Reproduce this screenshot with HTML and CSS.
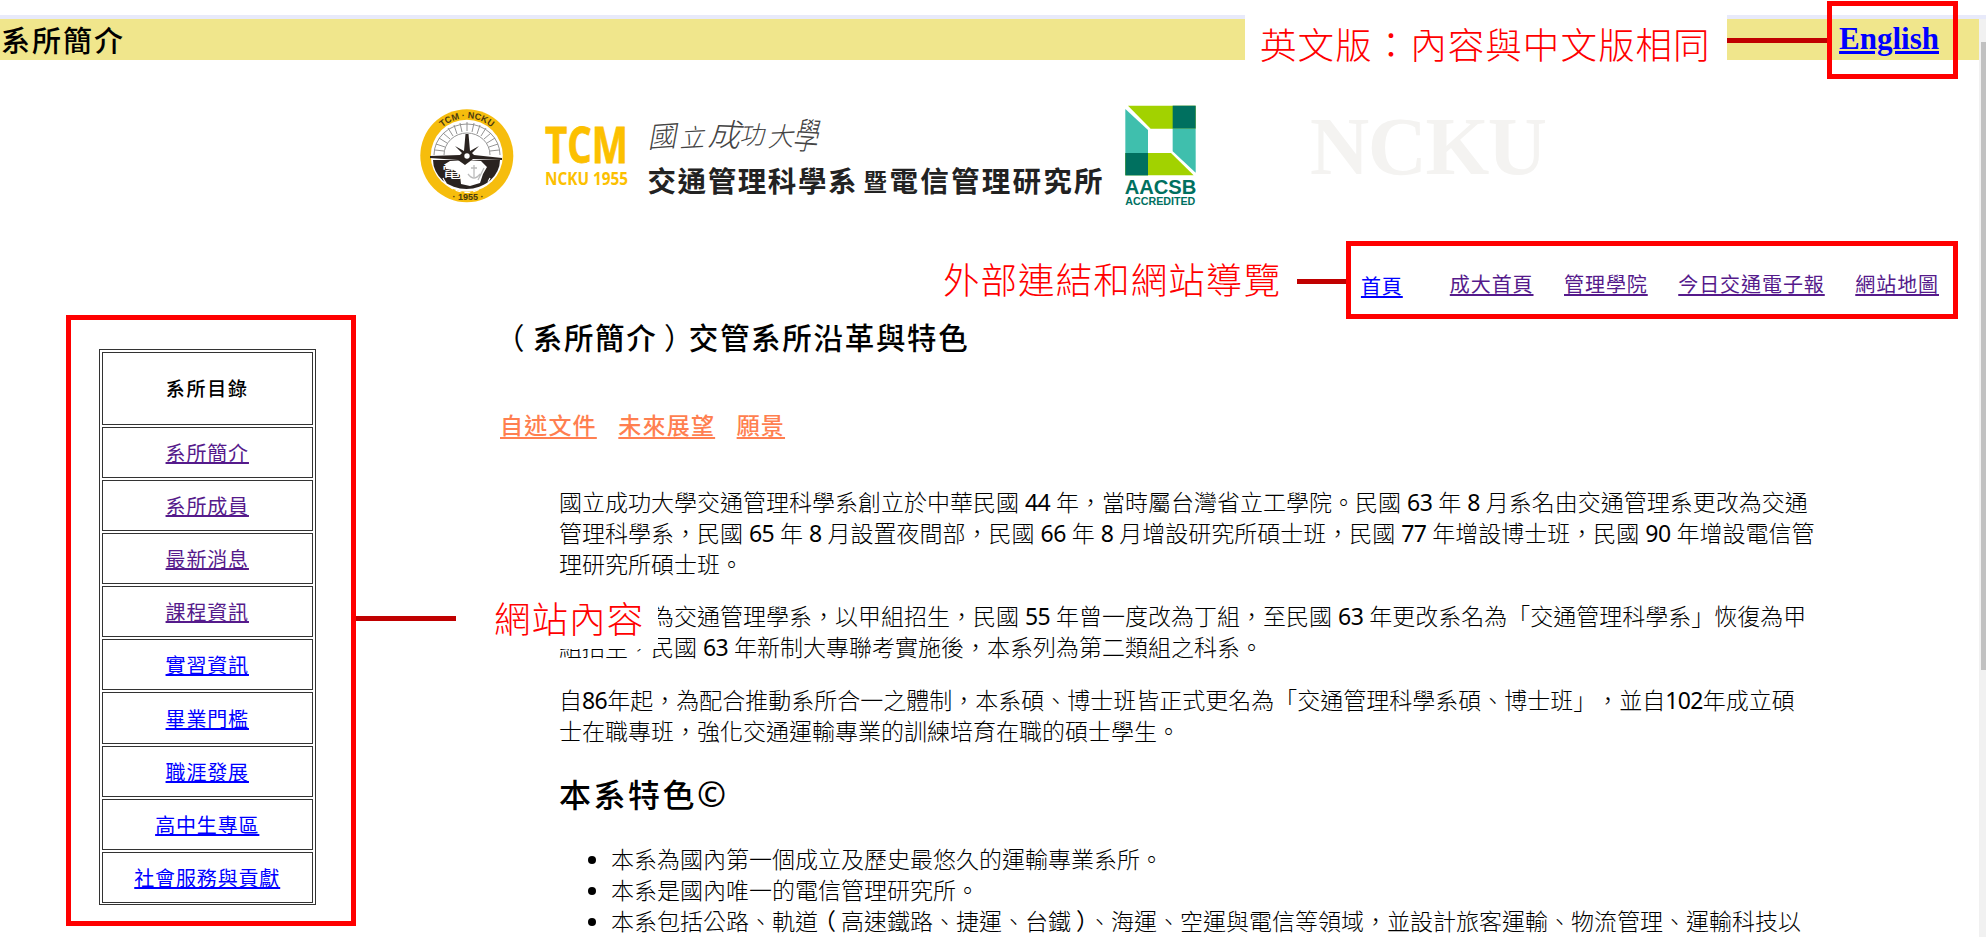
FILE: index.html
```html
<!DOCTYPE html>
<html lang="zh-Hant">
<head>
<meta charset="utf-8">
<title>系所簡介</title>
<link rel="stylesheet" href="styles.css">
</head>
<body>
<header class="topbar">
  <span class="topbar-title">系所簡介</span>
  <a class="lang" href="#">English</a>
</header>

<div class="banner">
  <svg class="logo" width="710" height="130" viewBox="0 0 710 130">
    <defs>
      <path id="arcTop" d="M29.5 65.5a37.300 37.300 0 0 1 74.600 0"/>
    </defs>
    <!-- emblem -->
    <circle cx="66.800" cy="65.700" r="46.500" fill="#f6bd0d"/>
    <circle cx="66.800" cy="65.700" r="36" fill="#fff"/>
    <g fill="none" stroke="#888" stroke-width=".9">
      <path d="M34 65a33 31 0 0 1 66 0M44 65a23 22 0 0 1 46 0"/>
      <path d="M35 60l9 1M36 54l9 3M39 48l8 5M43 43l7 6M48 38l5 8M54 35l3 9M60 33l2 9M67 32v9M74 33l-2 9M80 35l-3 9M86 38l-5 8M91 43l-7 6M95 48l-8 5M98 54l-9 3M99 60l-9 1"/>
    </g>
    <path d="M33 70h67a33.500 29 0 0 1-67 0z" fill="#2a2320"/>
    <path d="M43 88a25 22 0 0 0 47 0" fill="none" stroke="#fff" stroke-width="1.200" stroke-dasharray="6 3"/>
    <path d="M66 70l15 1 6 6-4 7-3 9-10 3-9-2-1-9-6-5-8-1-1-5 5-3z" fill="#fff"/>
    <path d="M30 66l30-1 2-2-7-7 9 5 1.500-17h3l1.500 17 9-5-7 7 2 2 28 3v2l-29-1-8 6-7-5-28-2z" fill="#2a2320"/>
    <circle cx="67" cy="66" r="2.700" fill="#fff"/>
    <text x="42" y="88" class="emblem-char" textLength="20" lengthAdjust="spacingAndGlyphs">電</text>
    <path d="M74 75v12M68 84q6 8 12 0M71 78h6M78 90l6-12" fill="none" stroke="#bbb" stroke-width="1.300"/>
    <text class="emblem-text"><textPath href="#arcTop" startOffset="50%" text-anchor="middle">TCM · NCKU</textPath></text>
    <text class="emblem-text" x="68" y="109.500" text-anchor="middle">· 1955 ·</text>
    <!-- wordmark -->
    <text class="tcm" x="145" y="73" textLength="83" lengthAdjust="spacingAndGlyphs">TCM</text>
    <text class="tcm-sub" x="145" y="95" textLength="83" lengthAdjust="spacingAndGlyphs">NCKU 1955</text>
    <g class="script">
      <text x="247" y="57" font-size="29" transform="rotate(-4 260 46)">國</text>
      <text x="279" y="57" font-size="25" transform="rotate(-3 290 46)">立</text>
      <text x="308" y="56" font-size="32" transform="rotate(3 322 46)">成</text>
      <text x="339" y="54" font-size="25" transform="rotate(-2 350 46)">功</text>
      <text x="367" y="56" font-size="26" transform="rotate(-3 380 46)">大</text>
      <text x="393" y="59" font-size="37" textLength="25" lengthAdjust="spacingAndGlyphs" transform="rotate(4 405 46)">學</text>
    </g>
    <text class="dept" x="247.500" y="101.500" textLength="209" lengthAdjust="spacing">交通管理科學系</text>
    <text class="dept dept-small" x="463.500" y="100.500">暨</text>
    <text class="dept" x="489.500" y="101.500" textLength="213" lengthAdjust="spacing">電信管理研究所</text>
  </svg>
  <svg class="aacsb" width="80" height="130" viewBox="960 0 240 390">
    <path d="M984 47h203v69H1052z" fill="#a2d200"/>
    <path d="M1118 47h69v69h-69z" fill="#00705f"/>
    <path d="M976 57l68 63v136h-68z" fill="#3fbfad"/>
    <path d="M1118 116h69v132l-69-64z" fill="#3fbfad"/>
    <path d="M976 189h137l68 67H976z" fill="#a2d200"/>
    <path d="M976 189h68v67h-68z" fill="#00705f"/>
    <text class="aacsb-name" x="974" y="312" textLength="215" lengthAdjust="spacingAndGlyphs">AACSB</text>
    <text class="aacsb-sub" x="976" y="346" textLength="210" lengthAdjust="spacingAndGlyphs">ACCREDITED</text>
  </svg>
  <span class="ghost">NCKU</span>
</div>

<nav class="links">
  <a class="home" href="#">首頁</a>
  <a href="#">成大首頁</a>
  <a href="#">管理學院</a>
  <a href="#">今日交通電子報</a>
  <a href="#">網站地圖</a>
</nav>

<div class="columns">
  <aside class="menu">
    <div class="cell head">系所目錄</div>
    <div class="cell"><a class="visited" href="#">系所簡介</a></div>
    <div class="cell"><a class="visited" href="#">系所成員</a></div>
    <div class="cell"><a class="visited" href="#">最新消息</a></div>
    <div class="cell"><a class="visited" href="#">課程資訊</a></div>
    <div class="cell"><a href="#">實習資訊</a></div>
    <div class="cell"><a href="#">畢業門檻</a></div>
    <div class="cell"><a href="#">職涯發展</a></div>
    <div class="cell"><a href="#">高中生專區</a></div>
    <div class="cell"><a href="#">社會服務與貢獻</a></div>
  </aside>
  <main class="content">
    <h1><span class="open">（</span>系所簡介<span class="close">）</span>交管系所沿革與特色</h1>
    <div class="anchors"><a href="#">自述文件</a><a href="#">未來展望</a><a href="#">願景</a></div>
    <div class="article">
      <p>國立成功大學交通管理科學系創立於中華民國 <span class="num">44</span> 年，當時屬台灣省立工學院。民國 <span class="num">63</span> 年 <span class="num">8</span> 月系名由交通管理系更改為交通<br>管理科學系，民國 <span class="num">65</span> 年 <span class="num">8</span> 月設置夜間部，民國 <span class="num">66</span> 年 <span class="num">8</span> 月增設研究所碩士班，民國 <span class="num">77</span> 年增設博士班，民國 <span class="num">90</span> 年增設電信管<br>理研究所碩士班。</p>
      <p>本系原名為交通管理學系，以甲組招生，民國 <span class="num">55</span> 年曾一度改為丁組，至民國 <span class="num">63</span> 年更改系名為「交通管理科學系」恢復為甲<br>組招生，民國 <span class="num">63</span> 年新制大專聯考實施後，本系列為第二類組之科系。</p>
      <p>自<span class="num">86</span>年起，為配合推動系所合一之體制，本系碩、博士班皆正式更名為「交通管理科學系碩、博士班」，並自<span class="num">102</span>年成立碩<br>士在職專班，強化交通運輸專業的訓練培育在職的碩士學生。</p>
      <h2>本系特色<span class="copy">©</span></h2>
      <ul>
        <li>本系為國內第一個成立及歷史最悠久的運輸專業系所。</li>
        <li>本系是國內唯一的電信管理研究所。</li>
        <li>本系包括公路、軌道<span class="open">（</span>高速鐵路、捷運、台鐵<span class="close tight">）</span>、海運、空運與電信等領域，並設計旅客運輸、物流管理、運輸科技以</li>
      </ul>
    </div>
  </main>
</div>

<div class="scrollbar"><div class="thumb"></div></div>

<div class="note note-lang">英文版：內容與中文版相同</div>
<div class="line line-lang"></div>
<div class="frame frame-lang"></div>
<div class="note note-nav">外部連結和網站導覽</div>
<div class="line line-nav"></div>
<div class="frame frame-nav"></div>
<div class="note note-menu">網站內容</div>
<div class="line line-menu"></div>
<div class="frame frame-menu"></div>
</body>
</html>
```
FILE: styles.css
```css
* { box-sizing: border-box; }

body {
  position: relative;
  margin: 0;
  padding-top: 15px;
  width: 1986px;
  height: 937px;
  overflow: hidden;
  background: #fff;
  color: #000;
  font-family: "Noto Sans", "Noto Sans CJK TC", sans-serif;
  text-spacing-trim: space-all;
}

a { color: #00f; text-decoration-thickness: 1.5px; }

/* Top bar */
.topbar {
  display: flex;
  justify-content: space-between;
  height: 44.5px;
  padding: 0 47px 0 1px;
  border-top: 4px solid #e8eafa;
  background: #f0e68c;
  line-height: 44px;
}
.topbar-title { font-size: 29px; font-weight: 500; letter-spacing: 2px; }
.lang {
  font: bold 31px/40px "Liberation Serif", serif;
  text-decoration-thickness: 2.5px;
}

/* Banner */
.banner { display: flex; height: 160.5px; padding: 30.5px 0 0 400px; }
.logo { flex: none; }
.aacsb { flex: none; margin-left: 10px; }
.emblem-text { font: bold 9px "Liberation Sans", sans-serif; fill: #4a3a10; }
.emblem-char { font: 17px "Noto Sans CJK TC", sans-serif; fill: #fff; }
.tcm { font: bold 50px "Open Sans", sans-serif; fill: #fcc000; stroke: #fcc000; stroke-width: .8; }
.tcm-sub { font: bold 18px "Open Sans", sans-serif; fill: #fcc000; }
.script { font-family: "Noto Sans CJK TC", sans-serif; font-weight: 300; font-style: italic; fill: #444; }
.dept { font: bold 28.500px "Noto Sans CJK TC", sans-serif; fill: #222; }
.dept-small { font-size: 23.500px; }
.aacsb-name { font: bold 63px "Liberation Sans", sans-serif; fill: #00705f; }
.aacsb-sub { font: bold 33px "Liberation Sans", sans-serif; fill: #00705f; }
.ghost {
  margin-left: 110px;
  font: bold 82px/114px "Liberation Serif", serif;
  letter-spacing: -1.500px;
  color: #f4f3f1;
}

/* External links */
.links {
  display: flex;
  justify-content: flex-end;
  gap: 30.500px;
  height: 90px;
  padding: 50px 47px 0 0;
  font-size: 20px;
  line-height: 30px;
  letter-spacing: .93px;
}
.links a { color: #551a8b; text-underline-offset: 2px; }
.links .home { margin: 2px 16.500px 0 0; color: #00f; }

/* Columns */
.columns { display: flex; align-items: flex-start; }
.menu {
  display: flex;
  flex: none;
  flex-direction: column;
  gap: 2px;
  width: 217px;
  margin: 39px 0 0 99px;
  padding: 1.500px 2px 1.500px 1.500px;
  border: 1px solid #333;
  font-size: 20px;
  letter-spacing: .85px;
}
.cell {
  display: flex;
  align-items: center;
  justify-content: center;
  height: 51.100px;
  border: 1px solid #333;
}
.cell a { text-underline-offset: 1px; }
.cell .visited { color: #551a8b; }
.head { height: 73.500px; font-size: 19px; font-weight: 500; letter-spacing: 1.800px; }

.content { margin-left: 184px; white-space: nowrap; }
h1 {
  margin: 7.500px 0 0 1.500px;
  font-size: 29.500px;
  font-weight: 500;
  line-height: 40px;
  letter-spacing: 1.700px;
}
.open, .close { position: relative; font-weight: 400; }
.open { left: -.22em; }
.close { left: .22em; }
.tight { margin-right: -6px; }
.anchors {
  display: flex;
  gap: 21.500px;
  margin-top: 52px;
  font-size: 23px;
  font-weight: 500;
  line-height: 30px;
  letter-spacing: 1.200px;
}
.anchors a { color: #ff7f50; text-decoration-thickness: 2px; text-underline-offset: 3px; }

.article {
  margin: 47px 0 0 59px;
  font-size: 23px;
  font-weight: 300;
  line-height: 31.200px;
}
.article p { margin: 0 0 21px; }
.num { font-weight: 400; letter-spacing: -.600px; }
h2 {
  margin: 28.400px 0;
  font-size: 32px;
  font-weight: 500;
  line-height: 40px;
  letter-spacing: 2.500px;
}
.copy { font-size: 35px; font-weight: 400; line-height: 1; }
ul { margin: 0; padding-left: 52px; }

/* Scrollbar */
.scrollbar {
  position: absolute;
  top: 19px;
  right: 0;
  width: 7px;
  height: 918px;
  padding: 23px 0 0 1.500px;
  background: #f1f1f1;
}
.thumb { height: 628px; background: #c1c1c1; }

/* Annotations laid over the page */
.note {
  position: absolute;
  background: #fff;
  color: #f00;
  font-size: 36.500px;
  font-weight: 300;
  letter-spacing: 1.050px;
  white-space: nowrap;
}
.note-lang { left: 1245px; top: 10px; width: 482px; height: 64px; padding-left: 15px; line-height: 70px; }
.note-nav { left: 943px; top: 255px; line-height: 50px; }
.note-menu { left: 481px; top: 590px; width: 177px; height: 58.500px; padding-left: 13px; line-height: 58px; }
.line { position: absolute; height: 5px; background: #c00000; }
.line-lang { left: 1727px; top: 38px; width: 101px; }
.line-nav { left: 1297px; top: 279px; width: 50px; }
.line-menu { left: 354px; top: 616px; width: 102px; }
.frame { position: absolute; border: 5px solid #f00; }
.frame-lang { left: 1827px; top: 1px; width: 131px; height: 78px; }
.frame-nav { left: 1346px; top: 241px; width: 612px; height: 78px; }
.frame-menu { left: 66px; top: 315px; width: 290px; height: 611px; }
```
